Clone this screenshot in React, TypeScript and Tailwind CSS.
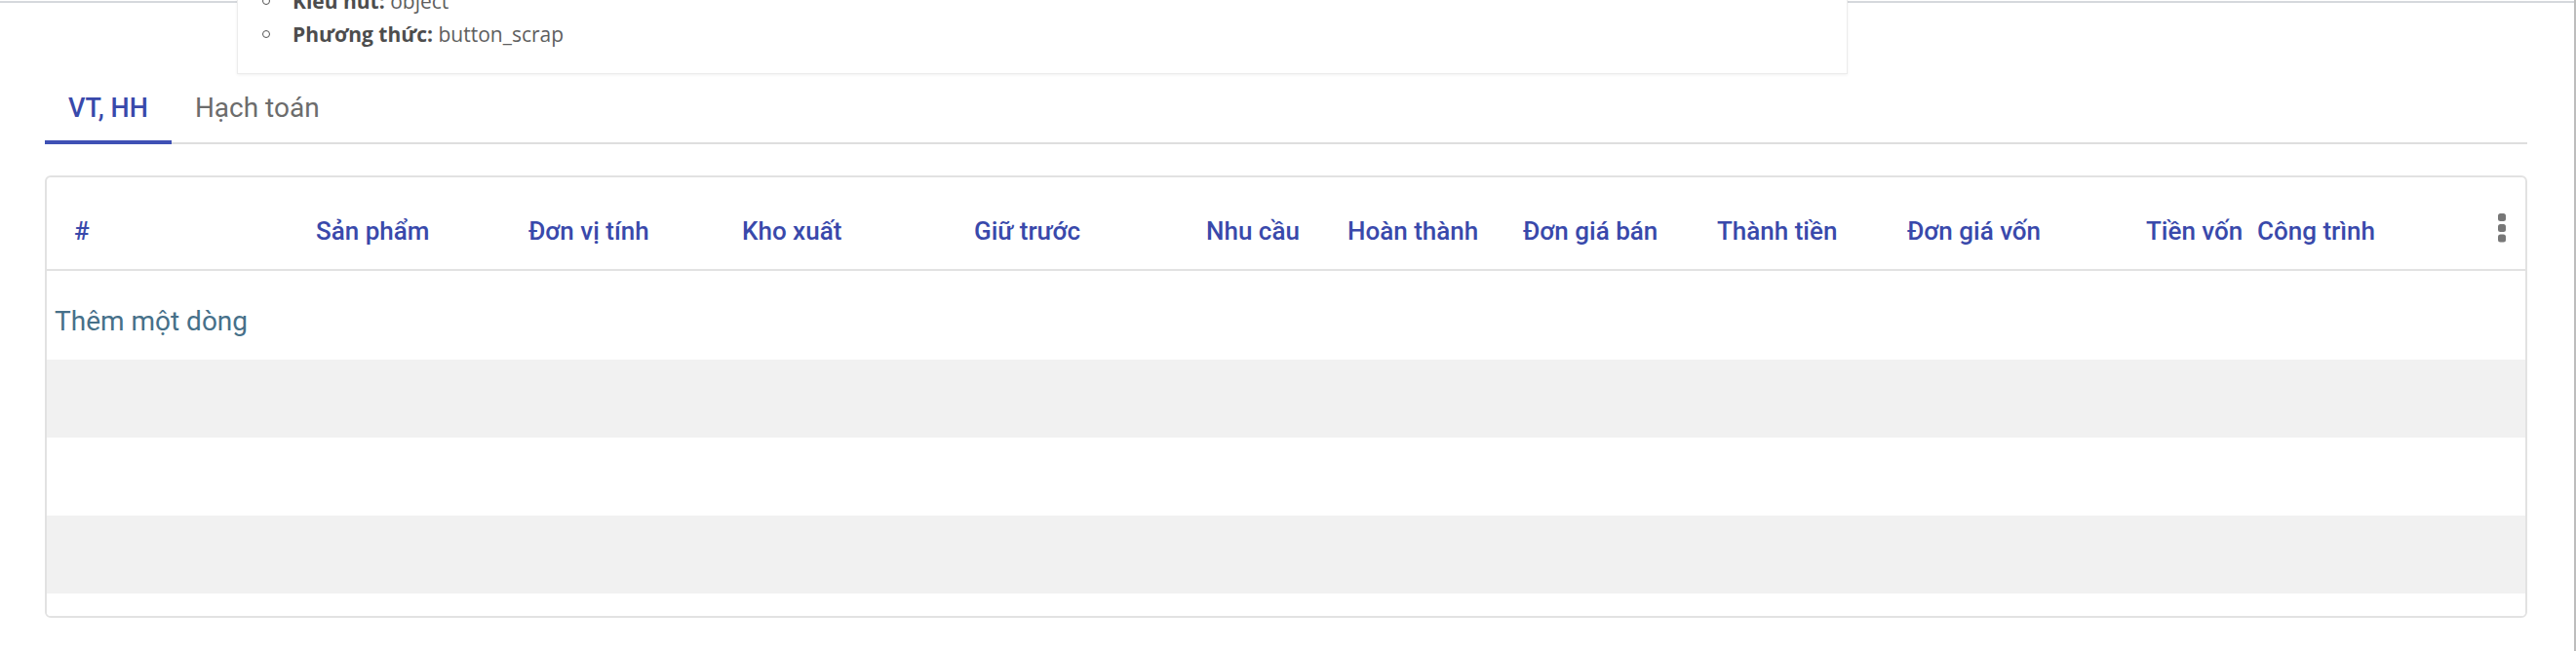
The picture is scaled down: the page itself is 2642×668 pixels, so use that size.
const columns = [
  { label: "#", cls: "w-[276px] pl-[28px]" },
  { label: "Sản phẩm", cls: "w-[218px]" },
  { label: "Đơn vị tính", cls: "w-[219px]" },
  { label: "Kho xuất", cls: "w-[238px]" },
  { label: "Giữ trước", cls: "w-[238px]" },
  { label: "Nhu cầu", cls: "w-[145px]" },
  { label: "Hoàn thành", cls: "w-[180px]" },
  { label: "Đơn giá bán", cls: "w-[199px]" },
  { label: "Thành tiền", cls: "w-[195px]" },
  { label: "Đơn giá vốn", cls: "w-[245px]" },
  { label: "Tiền vốn", cls: "w-[114px]" },
  { label: "Công trình", cls: "flex-1" },
];

function Kebab() {
  return (
    <svg width="8" height="30" viewBox="0 0 8 30" className="mt-[1px] shrink-0">
      <rect x="0" y="0" width="8" height="8" rx="2.5" fill="#777" />
      <rect x="0" y="11" width="8" height="8" rx="2.5" fill="#777" />
      <rect x="0" y="21.5" width="8" height="8" rx="2.5" fill="#777" />
    </svg>
  );
}

function Popup() {
  // tooltip cắt ở mép trên
  const items = [
    { k: "Kiểu nút:", v: "object" },
    { k: "Phương thức:", v: "button_scrap" },
  ];
  return (
    <div className="absolute left-[243px] top-[-40px] w-[1652px] h-[116px] bg-white border border-[#ececec] shadow-[0_1px_3px_rgba(0,0,0,0.06)] pt-[23px] font-['Open_Sans',sans-serif] text-[21px] leading-[34px]">
      {items.map((it) => (
        <div key={it.k} className="flex items-center pl-[25px] gap-[23px]">
          <span className="w-[8px] h-[8px] rounded-full border-[1.5px] border-[#555] shrink-0" />
          <span className="text-[#5e5e5e]">
            <b className="font-bold text-[#4d4d4d]">{it.k}</b> {it.v}
          </span>
        </div>
      ))}
    </div>
  );
}

export default function App() {
  return (
    <div className="relative h-[668px] w-[2642px] bg-white overflow-hidden flex font-['Roboto',sans-serif]">
      <div className="flex-1 flex flex-col pt-[1px]">
        <div className="h-[2px] bg-[#d5d8dc]" />

        <div className="pt-[88px] pl-[46px] pr-[48px]">
          {/* Tabs */}
          <div className="flex border-b-2 border-[#dedede]">
            <div className="px-6 pb-[13px] border-b-4 border-[#3f51b5] -mb-[2px] text-[27px] leading-[40px] font-medium text-[#3949ab]">
              VT, HH
            </div>
            <div className="px-6 pb-[13px] border-b-4 border-transparent -mb-[2px] text-[28px] leading-[40px] text-[#6c6c6c]">
              Hạch toán
            </div>
          </div>

          {/* Bảng */}
          <div className="mt-8 border-2 border-[#e2e2e2] rounded-md overflow-hidden">
            <div className="flex items-start h-[96px] pt-[36px] pr-5 border-b-2 border-[#e2e2e2]">
              {columns.map((c) => (
                <div
                  key={c.label}
                  className={`${c.cls} whitespace-nowrap text-[26px] leading-[38px] font-medium text-[#3949ab]`}
                >
                  {c.label}
                </div>
              ))}
              <Kebab />
            </div>

            <div className="h-[91px] pt-[32px] pl-2 text-[28px] leading-[40px] text-[#467089]">
              Thêm một dòng
            </div>
            <div className="h-[80px] bg-[#f1f1f1]" />
            <div className="h-[80px] bg-white" />
            <div className="h-[80px] bg-[#f1f1f1]" />
            <div className="h-[23px] bg-white" />
          </div>
        </div>
      </div>
      <div className="w-[2px] bg-[#bdbdbd]" />

      <Popup />
    </div>
  );
}
